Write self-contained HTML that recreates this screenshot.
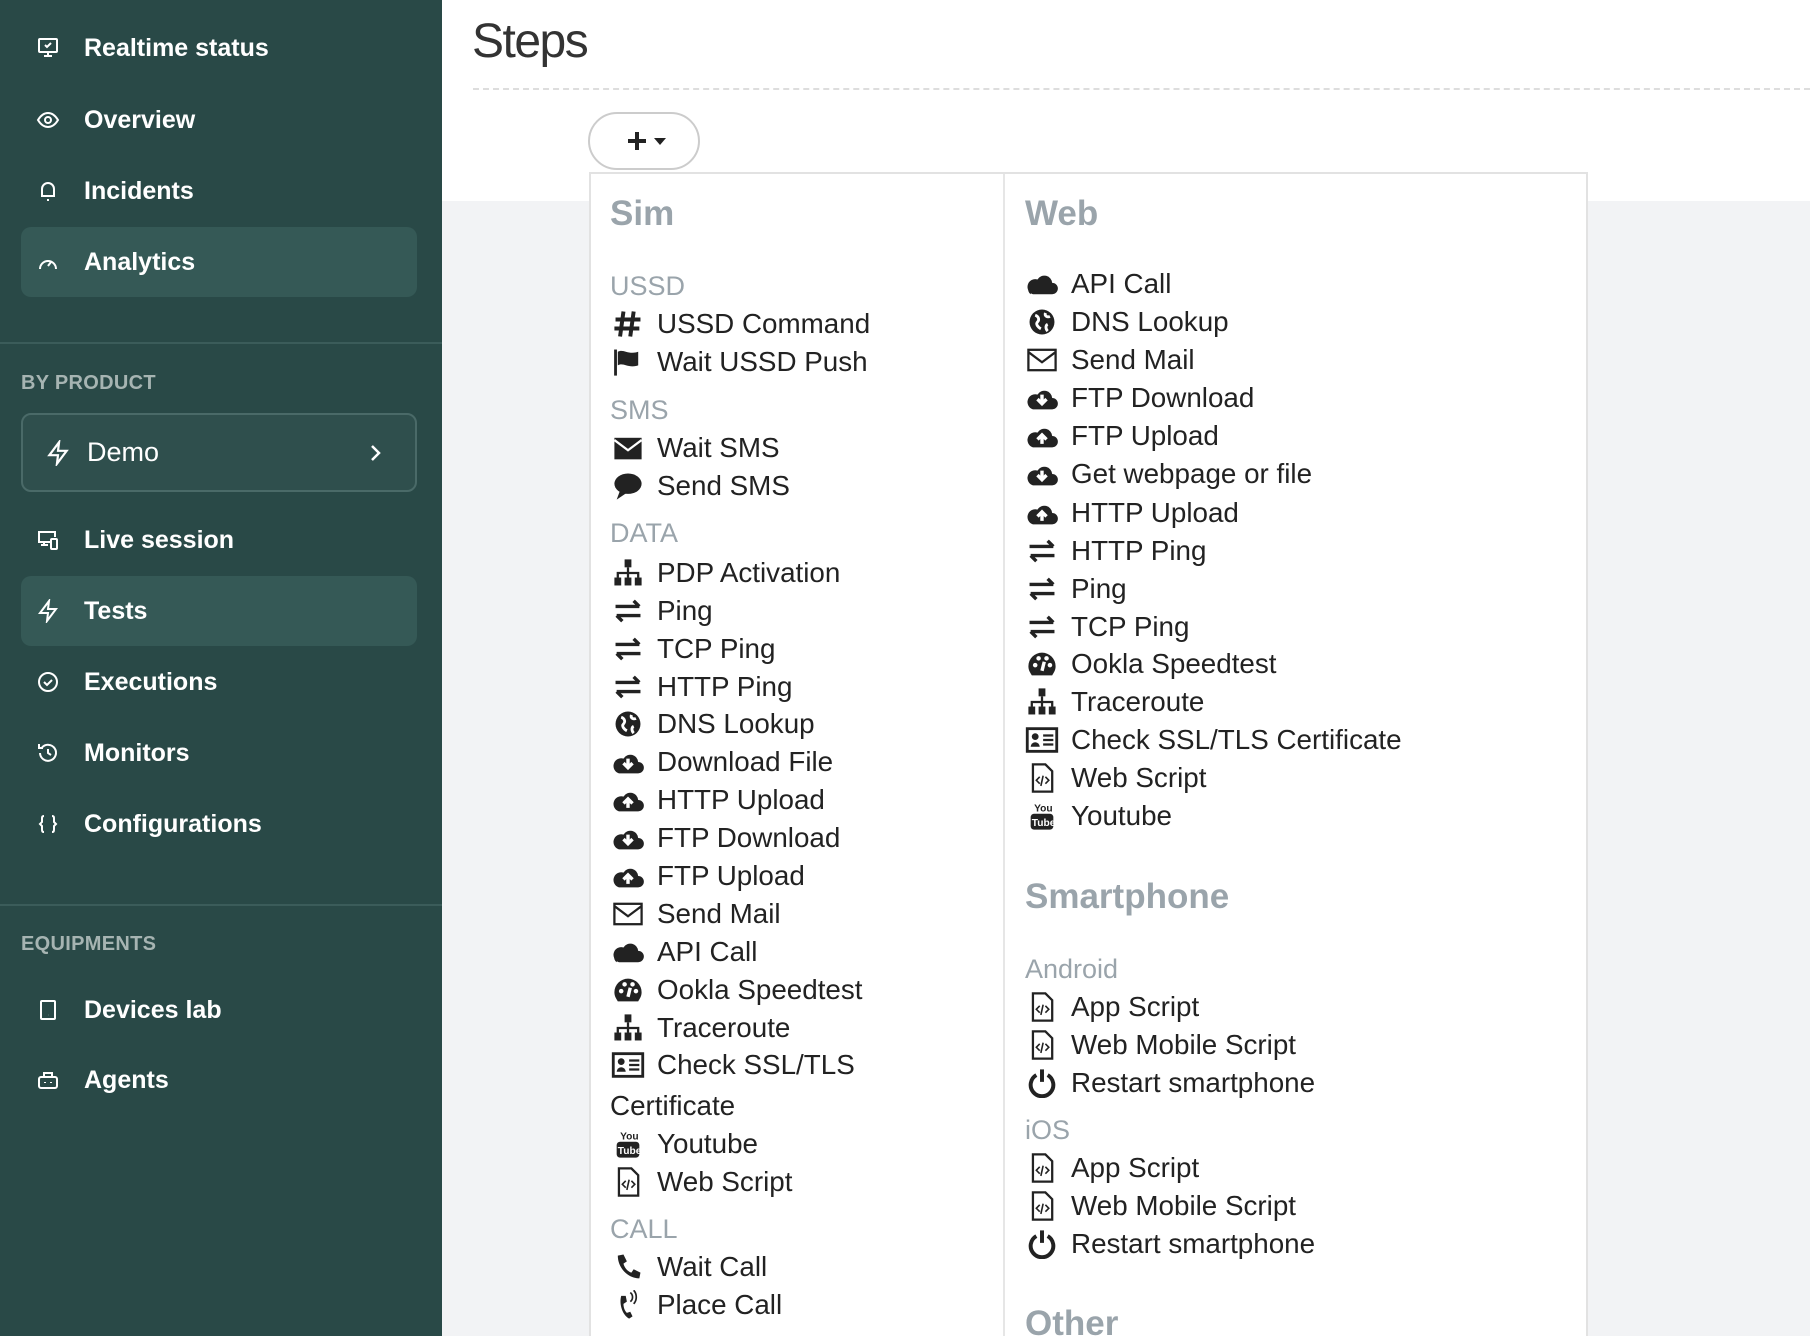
<!DOCTYPE html>
<html><head><meta charset="utf-8">
<style>
*{margin:0;padding:0;box-sizing:border-box}
html,body{width:1810px;height:1336px;overflow:hidden}
body{position:relative;background:#f2f3f5;font-family:"Liberation Sans",Arial,sans-serif}
#sb{position:absolute;left:0;top:0;width:442px;height:1336px;background:#294947}
.ni{position:absolute;left:21px;width:396px;height:70px;color:#fff;font-size:25px;font-weight:bold;display:flex;align-items:center;border-radius:10px}
.ni .ic{width:24px;height:24px;margin-left:15px;margin-right:24px;flex:none}
.ni.act{background:#355956}
.sep{position:absolute;left:0;width:442px;height:2px;background:#3b5c5a}
.cap{position:absolute;left:21px;color:#a6b4b2;font-size:20px;font-weight:bold;letter-spacing:.3px}
#demo{position:absolute;left:21px;top:413px;width:396px;height:79px;border:2px solid #4a6a68;border-radius:10px;background:#2f4f4d;color:#fff;font-size:27px;display:flex;align-items:center}
#top{position:absolute;left:442px;top:0;width:1368px;height:201px;background:#fff}
#title{position:absolute;left:472px;top:14px;font-size:48px;font-weight:normal;color:#333;letter-spacing:-1.5px}
#dashl{position:absolute;left:473px;top:88px;width:1337px;border-top:2px dashed #ddd}
#btn{position:absolute;left:588px;top:112px;width:112px;height:58px;border:2px solid #ccc;border-radius:29px;background:#fff}
#panel{position:absolute;left:589px;top:172px;width:999px;height:1170px;background:#fff;border:2px solid #e2e2e2}
#div{position:absolute;left:1003px;top:174px;width:2px;height:1162px;background:#e6e6e6}
.h{position:absolute;font-size:35px;font-weight:bold;color:#9aa4ab;line-height:44px}
.g{position:absolute;font-size:27px;color:#9aa4ab;line-height:38px}
.it{position:absolute;font-size:27.8px;color:#222;line-height:38px;white-space:nowrap}
.it svg{position:absolute;left:-46px;top:4px;width:34px;height:30px}
.s{left:657px}.w{left:1071px}
</style></head><body>
<svg width="0" height="0" style="position:absolute">
<defs>
<symbol id="cloud" viewBox="0 0 30 26"><path d="M7 22h17a5 5 0 0 0 0-10 7 7 0 0 0-13-3 5 5 0 0 0-4 13z" fill="#222"/><path d="M5 22a5 5 0 0 1 2-9" fill="#222"/></symbol>
<symbol id="cdown" viewBox="0 0 30 26"><path d="M7 23h17a5 5 0 0 0 0-10 7 7 0 0 0-13-3 6 6 0 0 0-4 13z" fill="#222"/><path d="M15 10v8M11 14l4 4 4-4" stroke="#fff" stroke-width="3" fill="none"/></symbol>
<symbol id="cup" viewBox="0 0 30 26"><path d="M7 23h17a5 5 0 0 0 0-10 7 7 0 0 0-13-3 6 6 0 0 0-4 13z" fill="#222"/><path d="M15 20v-8M11 16l4-4 4 4" stroke="#fff" stroke-width="3" fill="none"/></symbol>
<symbol id="globe" viewBox="0 0 30 26"><circle cx="15" cy="13" r="11" fill="#222"/><path d="M9 7c3 1 4 4 2 6s1 5 3 6M18 5c-1 3 2 4 4 3M20 15c-2 1-2 4 0 6" stroke="#fff" stroke-width="2.5" fill="none"/></symbol>
<symbol id="mailo" viewBox="0 0 30 26"><rect x="3" y="4" width="24" height="18" fill="none" stroke="#222" stroke-width="2"/><path d="M3 6l12 9 12-9" fill="none" stroke="#222" stroke-width="2"/></symbol>
<symbol id="mails" viewBox="0 0 30 26"><rect x="3" y="4" width="24" height="19" fill="#222"/><path d="M3 6l12 9 12-9" fill="none" stroke="#fff" stroke-width="2"/></symbol>
<symbol id="chat" viewBox="0 0 30 26"><ellipse cx="15" cy="11" rx="12" ry="9" fill="#222"/><path d="M8 17l-3 8 9-6z" fill="#222"/></symbol>
<symbol id="site" viewBox="0 0 30 26"><rect x="12" y="1" width="6" height="7" fill="#222"/><path d="M15 8v5M6 17v-4h18v4M15 13v4" stroke="#222" stroke-width="2" fill="none"/><rect x="3" y="17" width="6" height="7" fill="#222"/><rect x="12" y="17" width="6" height="7" fill="#222"/><rect x="21" y="17" width="6" height="7" fill="#222"/></symbol>
<symbol id="xch" viewBox="0 0 30 26"><path d="M4 9h21M20 4l5 5M26 17H5M10 22l-5-5" stroke="#222" stroke-width="3" fill="none"/></symbol>
<symbol id="speed" viewBox="0 0 30 26"><path d="M15 3a12 12 0 0 0-12 12c0 4 2 6 3 8h18c1-2 3-4 3-8A12 12 0 0 0 15 3z" fill="#222"/><circle cx="9" cy="14" r="2" fill="#fff"/><circle cx="12" cy="8" r="2" fill="#fff"/><circle cx="19" cy="8" r="2" fill="#fff"/><circle cx="22" cy="14" r="2" fill="#fff"/><path d="M15 19l2-8" stroke="#fff" stroke-width="3"/></symbol>
<symbol id="card" viewBox="0 0 30 26"><rect x="2" y="3" width="26" height="20" fill="none" stroke="#222" stroke-width="2.5"/><circle cx="9" cy="10" r="3" fill="#222"/><path d="M5 19a4 4 0 0 1 8 0z" fill="#222"/><path d="M16 9h9M16 13h9M16 17h9" stroke="#222" stroke-width="2"/></symbol>
<symbol id="file" viewBox="0 0 30 26"><path d="M7 1h11l6 6v18H7z" fill="none" stroke="#222" stroke-width="2"/><path d="M13 12l-3 3 3 3M18 12l3 3-3 3M16 11l-2 9" stroke="#222" stroke-width="1.4" fill="none"/></symbol>
<symbol id="yt" viewBox="0 0 30 26"><text x="8" y="9" font-size="9" font-family="Liberation Sans" font-weight="bold" fill="#222">You</text><rect x="5" y="11" width="20" height="14" rx="3" fill="#222"/><text x="6" y="22" font-size="9" font-family="Liberation Sans" font-weight="bold" fill="#fff">Tube</text></symbol>
<symbol id="pow" viewBox="0 0 30 26"><path d="M10 6a10 10 0 1 0 10 0" stroke="#222" stroke-width="3.5" fill="none"/><path d="M15 1v11" stroke="#222" stroke-width="3.5"/></symbol>
<symbol id="phone" viewBox="0 0 30 26"><path d="M6 3l5-1 3 6-3 2c1 4 4 7 7 8l2-3 6 3-1 5c-10 0-19-9-19-20z" fill="#222"/></symbol>
<symbol id="phv" viewBox="0 0 30 26"><path d="M9 5l4 0 1 5-3 2c0 3 1 6 3 8l3-1 2 4-3 2c-6-3-9-13-7-20z" fill="#222"/><path d="M17 2a5 5 0 0 1 0 8M20 0a9 9 0 0 1 0 12" stroke="#222" stroke-width="1.5" fill="none"/></symbol>
<symbol id="flag" viewBox="0 0 30 26"><path d="M4 2v23" stroke="#222" stroke-width="2.5"/><path d="M6 4c5-3 9 3 18 0v12c-9 3-13-3-18 0z" fill="#222"/></symbol>
<symbol id="hash" viewBox="0 0 30 26"><path d="M11 2l-3 22M20 2l-3 22M4 9h22M3 17h22" stroke="#222" stroke-width="3.5"/></symbol>
</defs></svg>

<div id="sb">
<div class="ni" style="top:13px"><svg class="ic" viewBox="0 0 24 24" fill="none" stroke="#fff" stroke-width="2"><rect x="3" y="3" width="18" height="13" rx="1"/><path d="M12 16v4M8 20h8M9 9l2 2 4-4"/></svg>Realtime status</div>
<div class="ni" style="top:85px"><svg class="ic" viewBox="0 0 24 24" fill="none" stroke="#fff" stroke-width="2"><path d="M2 12c3-5 6-7 10-7s7 2 10 7c-3 5-6 7-10 7s-7-2-10-7z"/><circle cx="12" cy="12" r="3"/></svg>Overview</div>
<div class="ni" style="top:156px"><svg class="ic" viewBox="0 0 24 24" fill="none" stroke="#fff" stroke-width="2"><path d="M6 17V10a6 6 0 0 1 12 0v7H5h14M11 21h2"/></svg>Incidents</div>
<div class="ni act" style="top:227px"><svg class="ic" viewBox="0 0 24 24" fill="none" stroke="#fff" stroke-width="2"><path d="M4 19a8 8 0 1 1 16 0M12 16l3-4"/></svg>Analytics</div>
<div class="sep" style="top:342px"></div>
<div class="cap" style="top:372px">BY PRODUCT</div>
<div id="demo"><svg viewBox="0 0 24 24" style="width:26px;height:26px;margin-left:22px;margin-right:16px" fill="none" stroke="#fff" stroke-width="2"><path d="M13 2L4 14h8l-1 8 9-12h-8z"/></svg>Demo<svg viewBox="0 0 24 24" style="width:24px;height:24px;margin-left:auto;margin-right:28px" fill="none" stroke="#fff" stroke-width="2.5"><path d="M9 5l7 7-7 7"/></svg></div>
<div class="ni" style="top:505px"><svg class="ic" viewBox="0 0 24 24" fill="none" stroke="#fff" stroke-width="2"><path d="M14 14H3V4h16v5M8 14v3H5M9 17h3"/><rect x="15" y="11" width="6" height="10" rx="1"/></svg>Live session</div>
<div class="ni act" style="top:576px"><svg class="ic" viewBox="0 0 24 24" fill="none" stroke="#fff" stroke-width="2"><path d="M13 2L4 14h8l-1 8 9-12h-8z"/></svg>Tests</div>
<div class="ni" style="top:647px"><svg class="ic" viewBox="0 0 24 24" fill="none" stroke="#fff" stroke-width="2"><circle cx="12" cy="12" r="9"/><path d="M8 12l3 3 5-5"/></svg>Executions</div>
<div class="ni" style="top:718px"><svg class="ic" viewBox="0 0 24 24" fill="none" stroke="#fff" stroke-width="2"><path d="M4 12a8 8 0 1 0 2-5.5M3 3v4h4M12 8v4l3 2"/></svg>Monitors</div>
<div class="ni" style="top:789px"><svg class="ic" viewBox="0 0 24 24" fill="none" stroke="#fff" stroke-width="2"><path d="M8 4c-2 0-2 1-2 3v3l-2 2 2 2v3c0 2 0 3 2 3M16 4c2 0 2 1 2 3v3l2 2-2 2v3c0 2 0 3-2 3"/></svg>Configurations</div>
<div class="sep" style="top:904px"></div>
<div class="cap" style="top:933px">EQUIPMENTS</div>
<div class="ni" style="top:975px"><svg class="ic" viewBox="0 0 24 24" fill="none" stroke="#fff" stroke-width="2"><rect x="5" y="3" width="14" height="18" rx="1"/><path d="M12 17h.1"/></svg>Devices lab</div>
<div class="ni" style="top:1045px"><svg class="ic" viewBox="0 0 24 24" fill="none" stroke="#fff" stroke-width="2"><rect x="3" y="9" width="18" height="11" rx="2"/><path d="M8 9V5h8v4M9 14v1M15 14v1"/></svg>Agents</div>
</div>

<div id="top"></div>
<div id="title">Steps</div>
<div id="dashl"></div>
<div id="btn"><svg viewBox="0 0 112 58" width="112" height="58" style="position:absolute;left:-2px;top:-2px"><path d="M40 29h18M49 20v18" stroke="#222" stroke-width="4"/><path d="M66 26h12l-6 7z" fill="#222"/></svg></div>
<div id="panel"></div>
<div id="div"></div>

<div class="h" style="left:610px;top:192px">Sim</div>
<div class="g" style="left:610px;top:267px">USSD</div>
<div class="it s" style="top:305px"><svg><use href="#hash"/></svg>USSD Command</div>
<div class="it s" style="top:343px"><svg><use href="#flag"/></svg>Wait USSD Push</div>
<div class="g" style="left:610px;top:391px">SMS</div>
<div class="it s" style="top:429px"><svg><use href="#mails"/></svg>Wait SMS</div>
<div class="it s" style="top:467px"><svg><use href="#chat"/></svg>Send SMS</div>
<div class="g" style="left:610px;top:514px">DATA</div>
<div class="it s" style="top:554px"><svg><use href="#site"/></svg>PDP Activation</div>
<div class="it s" style="top:592px"><svg><use href="#xch"/></svg>Ping</div>
<div class="it s" style="top:630px"><svg><use href="#xch"/></svg>TCP Ping</div>
<div class="it s" style="top:668px"><svg><use href="#xch"/></svg>HTTP Ping</div>
<div class="it s" style="top:705px"><svg><use href="#globe"/></svg>DNS Lookup</div>
<div class="it s" style="top:743px"><svg><use href="#cdown"/></svg>Download File</div>
<div class="it s" style="top:781px"><svg><use href="#cup"/></svg>HTTP Upload</div>
<div class="it s" style="top:819px"><svg><use href="#cdown"/></svg>FTP Download</div>
<div class="it s" style="top:857px"><svg><use href="#cup"/></svg>FTP Upload</div>
<div class="it s" style="top:895px"><svg><use href="#mailo"/></svg>Send Mail</div>
<div class="it s" style="top:933px"><svg><use href="#cloud"/></svg>API Call</div>
<div class="it s" style="top:971px"><svg><use href="#speed"/></svg>Ookla Speedtest</div>
<div class="it s" style="top:1009px"><svg><use href="#site"/></svg>Traceroute</div>
<div class="it s" style="top:1046px"><svg><use href="#card"/></svg>Check SSL/TLS</div>
<div class="it" style="left:610px;top:1087px">Certificate</div>
<div class="it s" style="top:1125px"><svg><use href="#yt"/></svg>Youtube</div>
<div class="it s" style="top:1163px"><svg><use href="#file"/></svg>Web Script</div>
<div class="g" style="left:610px;top:1210px">CALL</div>
<div class="it s" style="top:1248px"><svg><use href="#phone"/></svg>Wait Call</div>
<div class="it s" style="top:1286px"><svg><use href="#phv"/></svg>Place Call</div>

<div class="h" style="left:1025px;top:192px">Web</div>
<div class="it w" style="top:265px"><svg><use href="#cloud"/></svg>API Call</div>
<div class="it w" style="top:303px"><svg><use href="#globe"/></svg>DNS Lookup</div>
<div class="it w" style="top:341px"><svg><use href="#mailo"/></svg>Send Mail</div>
<div class="it w" style="top:379px"><svg><use href="#cdown"/></svg>FTP Download</div>
<div class="it w" style="top:417px"><svg><use href="#cup"/></svg>FTP Upload</div>
<div class="it w" style="top:455px"><svg><use href="#cdown"/></svg>Get webpage or file</div>
<div class="it w" style="top:494px"><svg><use href="#cup"/></svg>HTTP Upload</div>
<div class="it w" style="top:532px"><svg><use href="#xch"/></svg>HTTP Ping</div>
<div class="it w" style="top:570px"><svg><use href="#xch"/></svg>Ping</div>
<div class="it w" style="top:608px"><svg><use href="#xch"/></svg>TCP Ping</div>
<div class="it w" style="top:645px"><svg><use href="#speed"/></svg>Ookla Speedtest</div>
<div class="it w" style="top:683px"><svg><use href="#site"/></svg>Traceroute</div>
<div class="it w" style="top:721px"><svg><use href="#card"/></svg>Check SSL/TLS Certificate</div>
<div class="it w" style="top:759px"><svg><use href="#file"/></svg>Web Script</div>
<div class="it w" style="top:797px"><svg><use href="#yt"/></svg>Youtube</div>
<div class="h" style="left:1025px;top:875px">Smartphone</div>
<div class="g" style="left:1025px;top:950px">Android</div>
<div class="it w" style="top:988px"><svg><use href="#file"/></svg>App Script</div>
<div class="it w" style="top:1026px"><svg><use href="#file"/></svg>Web Mobile Script</div>
<div class="it w" style="top:1064px"><svg><use href="#pow"/></svg>Restart smartphone</div>
<div class="g" style="left:1025px;top:1111px">iOS</div>
<div class="it w" style="top:1149px"><svg><use href="#file"/></svg>App Script</div>
<div class="it w" style="top:1187px"><svg><use href="#file"/></svg>Web Mobile Script</div>
<div class="it w" style="top:1225px"><svg><use href="#pow"/></svg>Restart smartphone</div>
<div class="h" style="left:1025px;top:1302px">Other</div>
</body></html>
